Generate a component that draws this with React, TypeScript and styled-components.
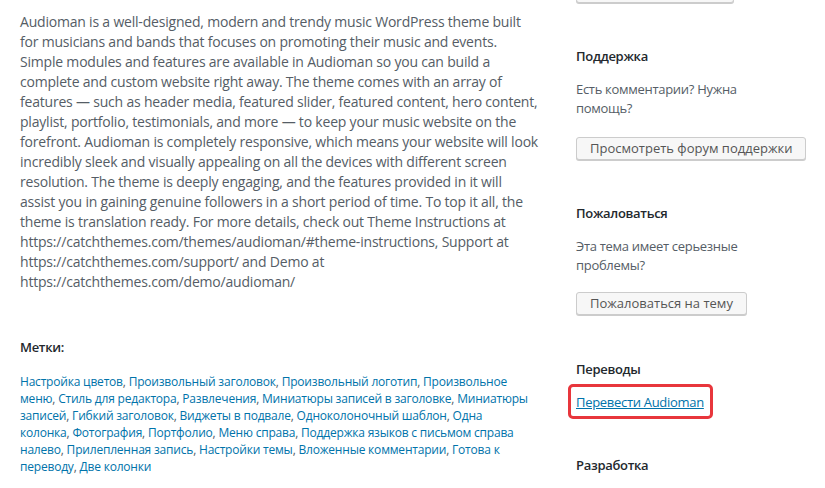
import React from "react";
import styled, { createGlobalStyle } from "styled-components";

const Global = createGlobalStyle`
  html, body { margin: 0; padding: 0; background: #fff; }
  body { font-family: "Open Sans", "Noto Sans", sans-serif; color: #555d66; overflow: hidden; }
  * { box-sizing: border-box; }
`;

const Page = styled.div`
  display: grid;
  grid-template-columns: 536px 1fr;
  column-gap: 20px;
  padding: 12px 0 0 20px;
  width: 825px;
  height: 488px;
`;

const Main = styled.div`
  display: flex;
  flex-direction: column;
`;

const Description = styled.p`
  margin: 0;
  font-size: 14px;
  line-height: 20px;
  letter-spacing: -0.2px;
  color: #555d66;
`;

const Line = styled.span`
  display: block;
  white-space: nowrap;
`;

const SectionTitle = styled.h3<{ $top?: number }>`
  margin: ${(p) => p.$top ?? 0}px 0 0;
  font-size: 13px;
  line-height: 20px;
  font-weight: 600;
  letter-spacing: -0.3px;
  color: #23282d;
`;

const Tags = styled.div`
  margin-top: 16px;
  font-size: 12px;
  line-height: 17px;
  letter-spacing: -0.2px;
  color: #555d66;
`;

const TagLink = styled.a`
  color: #0073aa;
  text-decoration: none;
`;

const Sidebar = styled.aside`
  display: flex;
  flex-direction: column;
  margin-top: -12px;
`;

const Section = styled.section<{ $gap?: number }>`
  display: flex;
  flex-direction: column;
  align-items: flex-start;
  margin-top: ${(p) => p.$gap ?? 43}px;
`;

const Text = styled.p`
  margin: 14px 0 0;
  width: 190px;
  font-size: 13px;
  line-height: 19px;
  letter-spacing: -0.3px;
  color: #555d66;
`;

const Button = styled.button<{ $mt?: number; $w?: number }>`
  margin-top: ${(p) => p.$mt ?? 19}px;
  ${(p) => (p.$w ? `width: ${p.$w}px;` : "")}
  height: 23px;
  padding: 0 13px;
  font-family: "Open Sans", "Noto Sans", sans-serif;
  font-size: 13px;
  line-height: 21px;
  color: #555;
  background: #f7f7f7;
  border: 1px solid #cccccc;
  border-radius: 3px;
  box-shadow: 0 1px 0 #cccccc;
  cursor: pointer;
  white-space: nowrap;
`;

const TopButton = styled(Button)`
  margin-top: -20px;
`;

const LinkRow = styled.p`
  margin: 13px 0 0;
  font-size: 13px;
  line-height: 20px;
  letter-spacing: -0.3px;
`;

const Highlighted = styled.a`
  position: relative;
  color: #0073aa;
  text-decoration: underline;
  &::after {
    content: "";
    position: absolute;
    left: -8px;
    right: -9px;
    top: -9px;
    bottom: -8px;
    border: 3px solid #e8363c;
    border-radius: 5px;
    pointer-events: none;
  }
`;

const descriptionLines = [
  "Audioman is a well-designed, modern and trendy music WordPress theme built",
  "for musicians and bands that focuses on promoting their music and events.",
  "Simple modules and features are available in Audioman so you can build a",
  "complete and custom website right away. The theme comes with an array of",
  "features — such as header media, featured slider, featured content, hero content,",
  "playlist, portfolio, testimonials, and more — to keep your music website on the",
  "forefront. Audioman is completely responsive, which means your website will look",
  "incredibly sleek and visually appealing on all the devices with different screen",
  "resolution. The theme is deeply engaging, and the features provided in it will",
  "assist you in gaining genuine followers in a short period of time. To top it all, the",
  "theme is translation ready. For more details, check out Theme Instructions at",
  "https://catchthemes.com/themes/audioman/#theme-instructions, Support at",
  "https://catchthemes.com/support/ and Demo at",
  "https://catchthemes.com/demo/audioman/",
];

const tagRows: string[][] = [
  ["Настройка цветов", "Произвольный заголовок", "Произвольный логотип", "Произвольное"],
  ["меню", "Стиль для редактора", "Развлечения", "Миниатюры записей в заголовке", "Миниатюры"],
  ["записей", "Гибкий заголовок", "Виджеты в подвале", "Одноколоночный шаблон", "Одна"],
  ["колонка", "Фотография", "Портфолио", "Меню справа", "Поддержка языков с письмом справа"],
  ["налево", "Прилепленная запись", "Настройки темы", "Вложенные комментарии", "Готова к"],
  ["переводу", "Две колонки"],
];

export default function App() {
  return (
    <>
      <Global />
      <Page>
        <Main>
          <Description>
            {descriptionLines.map((l) => (
              <Line key={l}>{l}</Line>
            ))}
          </Description>
          <SectionTitle $top={45}>Метки:</SectionTitle>
          <Tags>
            {tagRows.map((row, r) => (
              <Line key={r}>
                {row.map((t, i) => (
                  <React.Fragment key={t + i}>
                    <TagLink href="#">{t}</TagLink>
                    {i < row.length - 1 ? ", " : ""}
                  </React.Fragment>
                ))}
              </Line>
            ))}
          </Tags>
        </Main>
        <Sidebar>
          <TopButton $w={158} aria-label="Скачать" />
          <Section>
            <SectionTitle>Поддержка</SectionTitle>
            <Text>Есть комментарии? Нужна помощь?</Text>
            <Button>Просмотреть форум поддержки</Button>
          </Section>
          <Section>
            <SectionTitle>Пожаловаться</SectionTitle>
            <Text>Эта тема имеет серьезные проблемы?</Text>
            <Button $mt={17}>Пожаловаться на тему</Button>
          </Section>
          <Section $gap={44}>
            <SectionTitle>Переводы</SectionTitle>
            <LinkRow>
              <Highlighted href="#">Перевести Audioman</Highlighted>
            </LinkRow>
          </Section>
          <Section>
            <SectionTitle>Разработка</SectionTitle>
          </Section>
        </Sidebar>
      </Page>
    </>
  );
}
